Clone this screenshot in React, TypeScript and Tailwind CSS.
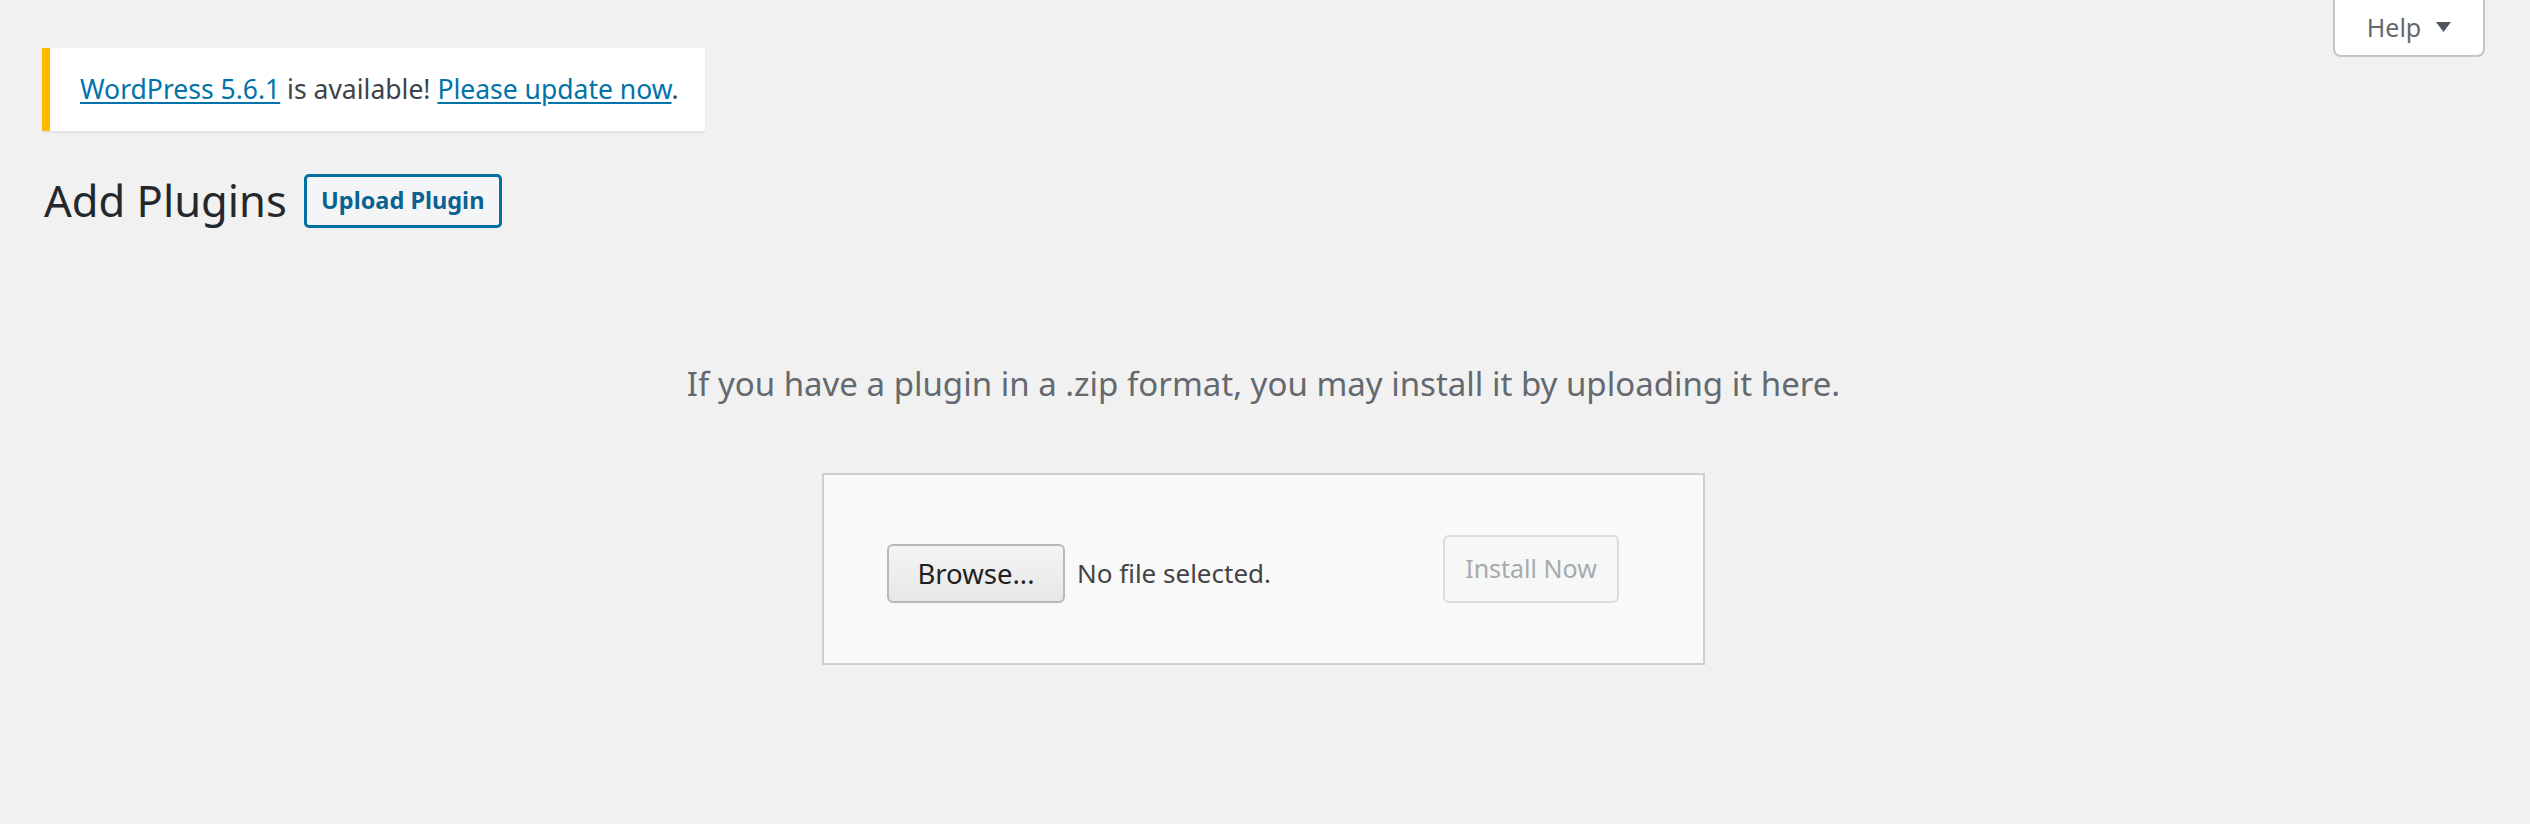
import React from "react";

const font = { fontFamily: '"Noto Sans", "Open Sans", sans-serif' };

function HelpTab() {
  return (
    <div className="flex h-[57px] w-[152px] items-center justify-center gap-[15px] rounded-b-[8px] border-2 border-t-0 border-[#c3c4c7] bg-white text-[25px] text-[#646970]">
      <span className="leading-none">Help</span>
      <svg width="15" height="10" viewBox="0 0 15 10" className="mt-[-2px]">
        <polygon points="0,0 15,0 7.5,10" fill="#50575e" />
      </svg>
    </div>
  );
}

function UpdateNotice() {
  return (
    <div className="ml-[42px] mt-[-9px] flex h-[83px] w-[663px] items-center border-l-[8px] border-[#ffb900] bg-white pl-[30px] shadow-[0_2px_2px_rgba(0,0,0,0.06)]">
      <p className="text-[26.5px] leading-[39px] text-[#3c434a]">
        <a href="#" className="text-[#0073aa] underline underline-offset-[3px]">
          WordPress 5.6.1
        </a>{" "}
        is available!{" "}
        <a href="#" className="text-[#0073aa] underline underline-offset-[3px]">
          Please update now
        </a>
        .
      </p>
    </div>
  );
}

function UploadForm() {
  return (
    <div className="mx-auto flex h-[192px] w-[883px] items-start border-2 border-[#ccd0d4] bg-[#f9f9f9] pl-[63px] pr-[84px] pt-[60px]">
      <div className="mt-[9px] flex items-center gap-[12px]">
        <button className="flex h-[59px] w-[178px] items-center justify-center rounded-[6px] border-2 border-[#b9b9b9] bg-gradient-to-b from-[#f4f4f4] to-[#e7e7e7] text-[27.5px] text-[#1f1f1f]">
          Browse...
        </button>
        <span className="text-[26px] text-[#444]">No file selected.</span>
      </div>
      <button
        disabled
        className="ml-auto flex h-[68px] w-[176px] items-center justify-center rounded-[6px] border-2 border-[#dcdcde] bg-[#f6f7f7] text-[25px] text-[#a7aaad]"
      >
        Install Now
      </button>
    </div>
  );
}

export default function App() {
  return (
    <div className="min-h-[824px] w-full bg-[#f1f1f1]" style={font}>
      <div className="flex justify-end pr-[45px]">
        <HelpTab />
      </div>
      <UpdateNotice />

      <div className="ml-[44px] mt-[40px] flex h-[60px] items-center gap-[17px]">
        <h1 className="text-[43.5px] font-normal leading-none text-[#23282d]">Add Plugins</h1>
        <button className="flex h-[54px] w-[198px] items-center justify-center rounded-[5px] border-[3px] border-[#0071a1] bg-[#f3f5f6] text-[23.5px] font-bold text-[#0a6290]">
          Upload Plugin
        </button>
      </div>

      <div className="pl-[42px] pr-[45px]">
        <p className="mt-[131px] text-center text-[33px] leading-[44px] text-[#646970]">
          If you have a plugin in a .zip format, you may install it by uploading it here.
        </p>
        <div className="mt-[67px]">
          <UploadForm />
        </div>
      </div>
    </div>
  );
}
